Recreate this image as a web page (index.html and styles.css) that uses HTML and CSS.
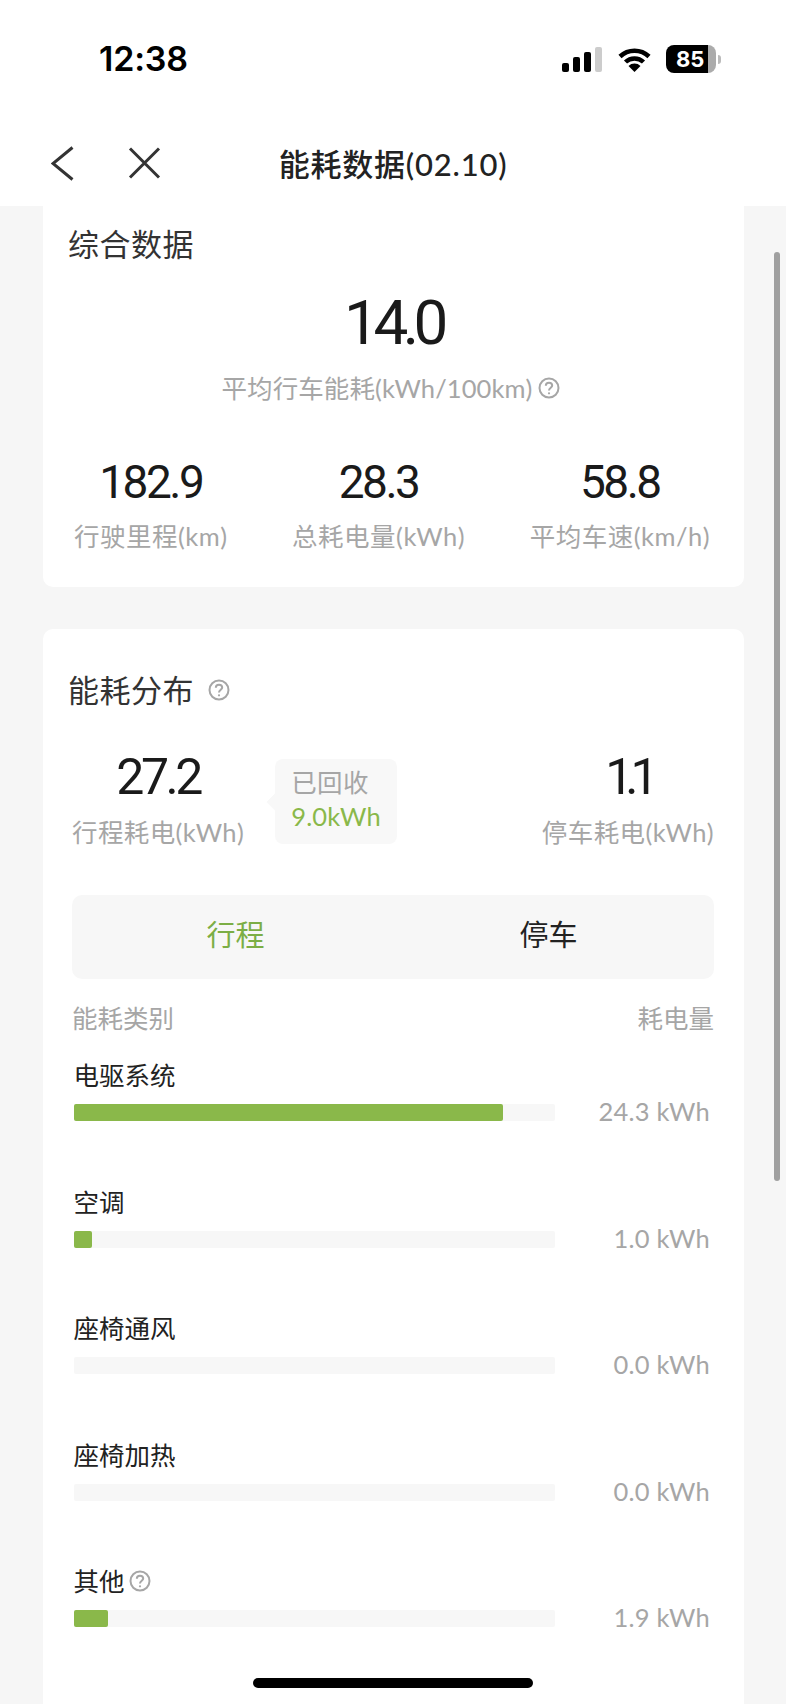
FILE: index.html
```html
<!DOCTYPE html>
<html>
<head>
    <meta charset="utf-8">
    <title>能耗数据</title>
    <link rel="stylesheet" href="styles.css">
</head>
<body>
<div class="phone">
    <div class="status">
        <span class="time">12:38</span>
        <div class="status-icons">
            <div class="signal">
                <i class="s1"></i><i class="s2"></i><i class="s3"></i><i class="s4"></i>
            </div>
            <svg class="wifi" viewBox="0 0 33 25">
                <path class="wifi-arc" d="M2 9.5A21 21 0 0 1 31 9.5"/>
                <path class="wifi-arc" d="M7.5 15A13 13 0 0 1 25.500 15"/>
                <path class="wifi-dot" d="M16.500 25L10.500 19A8.500 8.500 0 0 1 22.500 19Z"/>
            </svg>
            <div class="battery"><span class="battery-level">85</span></div>
            <i class="battery-nub"></i>
        </div>
    </div>

    <div class="nav">
        <svg class="nav-back" viewBox="0 0 23 35"><path d="M21.500 1.500L2 17.500L21.500 33.500"/></svg>
        <svg class="nav-close" viewBox="0 0 33 32"><path d="M2 1.500L31 30.500M31 1.500L2 30.500"/></svg>
        <div class="nav-title">能耗数据(02.10)</div>
    </div>

    <div class="content">
        <div class="card card-summary">
            <div class="card-title">综合数据</div>
            <div class="big-num">14.0</div>
            <div class="big-label">
                平均行车能耗(kWh/100km)
                <svg class="help" viewBox="0 0 22 22"><circle cx="11" cy="11" r="9.500"/><path d="M7.800 8.800C7.800 6.800 9.300 5.800 11 5.800C12.800 5.800 14.200 6.900 14.200 8.600C14.200 10.700 11 11 11 13.600"/><circle class="help-dot" cx="11" cy="16.300" r="1.100"/></svg>
            </div>
            <div class="stats">
                <div class="stat"><div class="stat-num">182.9</div><div class="stat-label">行驶里程(km)</div></div>
                <div class="stat"><div class="stat-num">28.3</div><div class="stat-label">总耗电量(kWh)</div></div>
                <div class="stat"><div class="stat-num">58.8</div><div class="stat-label">平均车速(km/h)</div></div>
            </div>
        </div>

        <div class="card card-dist">
            <div class="card-title">
                能耗分布
                <svg class="help help-title" viewBox="0 0 22 22"><circle cx="11" cy="11" r="9.500"/><path d="M7.800 8.800C7.800 6.800 9.300 5.800 11 5.800C12.800 5.800 14.200 6.900 14.200 8.600C14.200 10.700 11 11 11 13.600"/><circle class="help-dot" cx="11" cy="16.300" r="1.100"/></svg>
            </div>

            <div class="usage">
                <div class="stat"><div class="usage-num">27.2</div><div class="usage-label">行程耗电(kWh)</div></div>
                <div class="bubble">
                    <div class="bubble-label">已回收</div>
                    <div class="bubble-value">9.0kWh</div>
                </div>
                <div class="stat usage-right"><div class="usage-num usage-num-tight">1.1</div><div class="usage-label">停车耗电(kWh)</div></div>
            </div>

            <div class="tabs">
                <div class="tab tab-active">行程</div>
                <div class="tab">停车</div>
            </div>

            <div class="list-head">
                <span>能耗类别</span>
                <span>耗电量</span>
            </div>

            <div class="row row-first">
                <div class="row-label">电驱系统</div>
                <div class="row-line">
                    <div class="track"><div class="fill" style="width: 89.3%"></div></div>
                    <span class="row-value">24.3 kWh</span>
                </div>
            </div>
            <div class="row">
                <div class="row-label">空调</div>
                <div class="row-line">
                    <div class="track"><div class="fill" style="width: 3.8%"></div></div>
                    <span class="row-value">1.0 kWh</span>
                </div>
            </div>
            <div class="row">
                <div class="row-label">座椅通风</div>
                <div class="row-line">
                    <div class="track"></div>
                    <span class="row-value">0.0 kWh</span>
                </div>
            </div>
            <div class="row">
                <div class="row-label">座椅加热</div>
                <div class="row-line">
                    <div class="track"></div>
                    <span class="row-value">0.0 kWh</span>
                </div>
            </div>
            <div class="row">
                <div class="row-label">
                    其他
                    <svg class="help" viewBox="0 0 22 22"><circle cx="11" cy="11" r="9.500"/><path d="M7.800 8.800C7.800 6.800 9.300 5.800 11 5.800C12.800 5.800 14.200 6.900 14.200 8.600C14.200 10.700 11 11 11 13.600"/><circle class="help-dot" cx="11" cy="16.300" r="1.100"/></svg>
                </div>
                <div class="row-line">
                    <div class="track"><div class="fill" style="width: 7.1%"></div></div>
                    <span class="row-value">1.9 kWh</span>
                </div>
            </div>
        </div>
    </div>

    <div class="scrollbar"></div>
    <div class="home-bar"></div>
</div>
</body>
</html>
```

FILE: styles.css
```css
html, body {
    margin: 0;
    padding: 0;
}

.phone {
    position: relative;
    width: 786px;
    height: 1704px;
    overflow: hidden;
    background-color: #F6F6F6;
    font-family: Lato, "Noto Sans CJK SC", sans-serif;
    color: #222;
}

/* status bar */
.status {
    height: 122px;
    box-sizing: border-box;
    padding: 38px 0 0 99px;
    display: flex;
    background-color: #FFF;
}

.time {
    font-family: Inter, sans-serif;
    font-size: 34px;
    font-weight: 600;
    line-height: 42px;
    letter-spacing: -0.2px;
    color: #000;
}

.status-icons {
    margin-left: auto;
    margin-right: 65px;
    height: 42px;
    display: flex;
    align-items: center;
}

.signal {
    display: flex;
    align-items: flex-end;
    gap: 4px;
    height: 25px;
    margin-right: 16px;
}

.signal i {
    display: block;
    width: 7px;
    border-radius: 2px;
    background-color: #000;
}

.signal .s1 { height: 9px; }
.signal .s2 { height: 15px; }
.signal .s3 { height: 20px; }
.signal .s4 { height: 25px; background-color: #CCC; }

.wifi {
    width: 33px;
    height: 25px;
    margin-right: 15px;
}

.wifi-arc {
    fill: none;
    stroke: #000;
    stroke-width: 4.5;
}

.wifi-dot {
    fill: #000;
}

.battery {
    width: 50px;
    height: 28px;
    box-sizing: border-box;
    padding-left: 10px;
    border-radius: 8px;
    background: linear-gradient(to right, #000 84%, #ABABAB 84%);
}

.battery-level {
    font-family: Inter, sans-serif;
    font-size: 22px;
    font-weight: 700;
    line-height: 28px;
    color: #FFF;
}

.battery-nub {
    display: block;
    width: 3px;
    height: 9px;
    margin-left: 2px;
    border-radius: 0 3px 3px 0;
    background-color: #BBB;
}

/* nav */
.nav {
    position: relative;
    height: 84px;
    display: flex;
    align-items: center;
    justify-content: center;
    background-color: #FFF;
}

.nav-title {
    font-size: 31px;
    font-weight: 500;
    color: #222;
    letter-spacing: 0.8px;
    margin-bottom: 3px;
}

.nav-back, .nav-close {
    position: absolute;
    fill: none;
    stroke: #333;
    stroke-width: 3;
}

.nav-back {
    left: 51px;
    top: 24px;
    width: 23px;
    height: 35px;
}

.nav-close {
    left: 128px;
    top: 25px;
    width: 33px;
    height: 32px;
}

/* cards */
.content {
    padding: 0 42px 0 43px;
}

.card {
    background-color: #FFF;
    border-radius: 10px;
}

.card-summary {
    padding: 20px 0 36px;
    border-radius: 0 0 10px 10px;
}

.card-dist {
    margin-top: 42px;
    padding: 43px 30px 90px 29px;
}

.card-title {
    display: flex;
    align-items: center;
    font-size: 31px;
    line-height: 36px;
    letter-spacing: 0.5px;
    color: #333;
}

.card-summary .card-title {
    padding-left: 25px;
}

.card-dist .card-title {
    margin-left: -4px;
}

.big-num {
    margin-top: 32px;
    font-family: Roboto, sans-serif;
    font-size: 62px;
    line-height: 58px;
    letter-spacing: -5.5px;
    text-align: center;
    color: #1A1A1A;
}

.big-label {
    margin-top: 21px;
    padding-right: 6px;
    display: flex;
    align-items: center;
    justify-content: center;
    font-size: 25.5px;
    line-height: 30px;
    letter-spacing: 0.1px;
    color: #A6A6A6;
}

.help {
    flex: none;
    width: 22px;
    height: 22px;
    margin-left: 5px;
    fill: none;
    stroke: #A6A6A6;
    stroke-width: 2;
}

.help-dot {
    fill: #A6A6A6;
    stroke: none;
}

.help-title {
    margin-left: 14px;
}

.stats {
    margin-top: 58px;
    padding: 0 34px 0 31px;
    display: flex;
    justify-content: space-between;
}

.stat {
    text-align: center;
}

.stat-num {
    position: relative;
    top: 1px;
    font-family: Roboto, sans-serif;
    font-size: 46px;
    line-height: 40px;
    letter-spacing: -2.5px;
    color: #1A1A1A;
}

.stat-label {
    margin-top: 20px;
    font-size: 25.5px;
    line-height: 30px;
    letter-spacing: 0.5px;
    color: #A6A6A6;
}

/* usage row */
.usage {
    margin-top: 47px;
    display: flex;
    align-items: flex-start;
}

.usage-right {
    margin-left: auto;
}

.usage-num {
    font-family: Roboto, sans-serif;
    font-size: 50px;
    line-height: 44px;
    letter-spacing: -3.5px;
    color: #1A1A1A;
}

.usage-num-tight {
    letter-spacing: -8px;
}

.usage-label {
    margin-top: 18px;
    font-size: 25.5px;
    line-height: 30px;
    letter-spacing: 0.4px;
    color: #A6A6A6;
}

.bubble {
    position: relative;
    margin: 4px 0 0 31px;
    width: 122px;
    height: 85px;
    box-sizing: border-box;
    padding: 7px 0 0 16px;
    border-radius: 8px;
    background-color: #F8F8F8;
}

.bubble:before {
    content: "";
    position: absolute;
    left: -6px;
    top: 37px;
    width: 12px;
    height: 12px;
    transform: rotate(45deg);
    background-color: #F8F8F8;
}

.bubble-label {
    position: relative;
    font-size: 25.5px;
    line-height: 32px;
    letter-spacing: 0.4px;
    color: #A6A6A6;
}

.bubble-value {
    position: relative;
    font-size: 25.5px;
    line-height: 36px;
    letter-spacing: 0.2px;
    color: #8AB84A;
}

/* tabs */
.tabs {
    margin-top: 48px;
    height: 84px;
    padding: 0 9px 0 7px;
    display: flex;
    border-radius: 10px;
    background-color: #F7F7F7;
}

.tab {
    flex: 1;
    text-align: center;
    font-size: 29px;
    line-height: 80px;
    color: #222;
}

.tab-active {
    color: #7CAE45;
}

/* list */
.list-head {
    margin-top: 24px;
    display: flex;
    justify-content: space-between;
    font-size: 25.5px;
    line-height: 30px;
    color: #A6A6A6;
}

.row {
    margin: 65.5px 4px 0 1.5px;
}

.row-first {
    margin-top: 27px;
}

.row-label {
    display: flex;
    align-items: center;
    font-size: 25.5px;
    line-height: 30px;
    color: #222;
}

.row-label .help {
    margin-left: 4px;
}

.row-line {
    margin-top: 14px;
    height: 17px;
    display: flex;
    align-items: center;
    justify-content: space-between;
}

.track {
    width: 481px;
    height: 17px;
    border-radius: 2px;
    background-color: #F7F7F7;
}

.fill {
    height: 17px;
    border-radius: 2px;
    background-color: #8AB84A;
}

.row-value {
    padding-bottom: 2px;
    font-size: 25.5px;
    line-height: 17px;
    letter-spacing: 0.2px;
    color: #A6A6A6;
}

/* overlays */
.scrollbar {
    position: absolute;
    left: 774px;
    top: 252px;
    width: 6px;
    height: 929px;
    border-radius: 3px;
    background-color: #A0A0A0;
}

.home-bar {
    position: absolute;
    left: 253px;
    top: 1678px;
    width: 280px;
    height: 10px;
    border-radius: 5px;
    background-color: #000;
}
```
